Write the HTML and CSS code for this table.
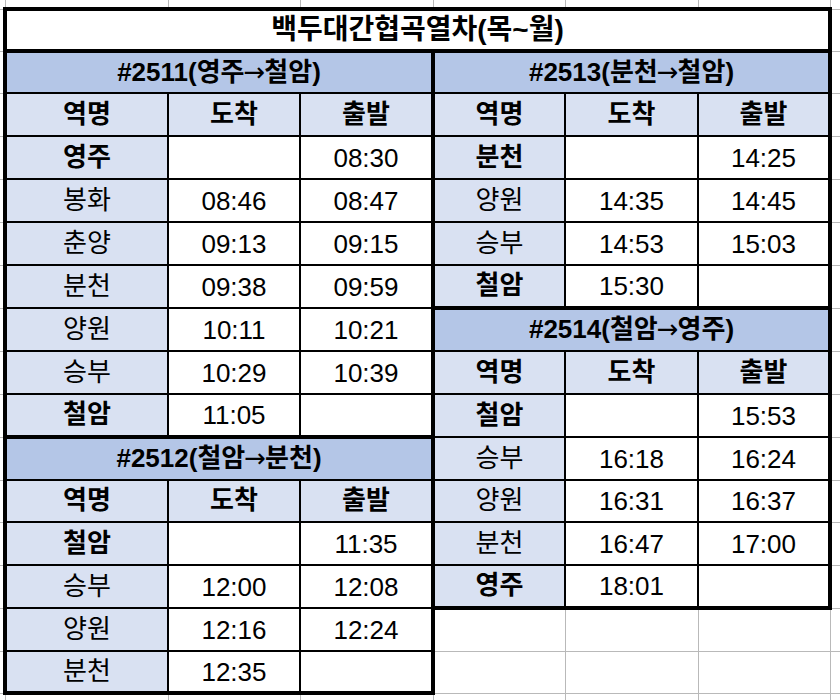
FILE: index.html
```html
<!DOCTYPE html>
<html lang="ko">
<head>
<meta charset="utf-8">
<title>백두대간협곡열차(목~월)</title>
<link rel="stylesheet" href="styles.css">
</head>
<body>
<table class="sheet">
  <colgroup>
    <col class="c-edge">
    <col class="c-a">
    <col class="c-b">
    <col class="c-c">
    <col class="c-b">
    <col class="c-c">
    <col class="c-b">
    <col class="c-end">
  </colgroup>
  <tr class="r-top">
    <td class="g e0"></td><td class="g"></td><td class="g"></td><td class="g"></td><td class="g"></td><td class="g"></td><td class="g"></td><td class="g"></td>
  </tr>
  <tr class="r42">
    <td class="g e0"></td>
    <td class="title" colspan="6">백두대간협곡열차(목~월)</td>
    <td class="g"></td>
  </tr>
  <tr class="r42">
    <td class="g e0"></td>
    <td class="hd" colspan="3">#2511(영주<span class="arr">→</span>철암)</td>
    <td class="hd" colspan="3">#2513(분천<span class="arr">→</span>철암)</td>
    <td class="g"></td>
  </tr>
  <tr class="r43">
    <td class="g e0"></td>
    <td class="ch l">역명</td><td class="ch">도착</td><td class="ch r">출발</td>
    <td class="ch l">역명</td><td class="ch">도착</td><td class="ch r">출발</td>
    <td class="g"></td>
  </tr>
  <tr class="r43">
    <td class="g e0"></td>
    <td class="st b l">영주</td><td class="t"></td><td class="t r">08:30</td>
    <td class="st b l">분천</td><td class="t"></td><td class="t r">14:25</td>
    <td class="g"></td>
  </tr>
  <tr class="r43">
    <td class="g e0"></td>
    <td class="st l">봉화</td><td class="t">08:46</td><td class="t r">08:47</td>
    <td class="st l">양원</td><td class="t">14:35</td><td class="t r">14:45</td>
    <td class="g"></td>
  </tr>
  <tr class="r43">
    <td class="g e0"></td>
    <td class="st l">춘양</td><td class="t">09:13</td><td class="t r">09:15</td>
    <td class="st l">승부</td><td class="t">14:53</td><td class="t r">15:03</td>
    <td class="g"></td>
  </tr>
  <tr class="r43">
    <td class="g e0"></td>
    <td class="st l">분천</td><td class="t">09:38</td><td class="t r">09:59</td>
    <td class="st b l bt">철암</td><td class="t bt">15:30</td><td class="t r bt"></td>
    <td class="g"></td>
  </tr>
  <tr class="r43">
    <td class="g e0"></td>
    <td class="st l">양원</td><td class="t">10:11</td><td class="t r">10:21</td>
    <td class="hd" colspan="3">#2514(철암<span class="arr">→</span>영주)</td>
    <td class="g"></td>
  </tr>
  <tr class="r43">
    <td class="g e0"></td>
    <td class="st l">승부</td><td class="t">10:29</td><td class="t r">10:39</td>
    <td class="ch l">역명</td><td class="ch">도착</td><td class="ch r">출발</td>
    <td class="g"></td>
  </tr>
  <tr class="r43">
    <td class="g e0"></td>
    <td class="st b l bt">철암</td><td class="t bt">11:05</td><td class="t r bt"></td>
    <td class="st b l">철암</td><td class="t"></td><td class="t r">15:53</td>
    <td class="g"></td>
  </tr>
  <tr class="r43">
    <td class="g e0"></td>
    <td class="hd" colspan="3">#2512(철암<span class="arr">→</span>분천)</td>
    <td class="st l">승부</td><td class="t">16:18</td><td class="t r">16:24</td>
    <td class="g"></td>
  </tr>
  <tr class="r42">
    <td class="g e0"></td>
    <td class="ch l">역명</td><td class="ch">도착</td><td class="ch r">출발</td>
    <td class="st l">양원</td><td class="t">16:31</td><td class="t r">16:37</td>
    <td class="g"></td>
  </tr>
  <tr class="r43">
    <td class="g e0"></td>
    <td class="st b l">철암</td><td class="t"></td><td class="t r">11:35</td>
    <td class="st l">분천</td><td class="t">16:47</td><td class="t r">17:00</td>
    <td class="g"></td>
  </tr>
  <tr class="r43">
    <td class="g e0"></td>
    <td class="st l">승부</td><td class="t">12:00</td><td class="t r">12:08</td>
    <td class="st b l bt">영주</td><td class="t bt">18:01</td><td class="t r bt"></td>
    <td class="g"></td>
  </tr>
  <tr class="r43">
    <td class="g e0"></td>
    <td class="st l">양원</td><td class="t">12:16</td><td class="t r">12:24</td>
    <td class="g"></td><td class="g"></td><td class="g"></td>
    <td class="g"></td>
  </tr>
  <tr class="r42">
    <td class="g e0"></td>
    <td class="st l bt">분천</td><td class="t bt">12:35</td><td class="t r bt"></td>
    <td class="g"></td><td class="g"></td><td class="g"></td>
    <td class="g"></td>
  </tr>
  <tr class="r-bottom">
    <td class="g e0"></td><td class="g"></td><td class="g"></td><td class="g"></td><td class="g"></td><td class="g"></td><td class="g"></td><td class="g"></td>
  </tr>
</table>
</body>
</html>
```

FILE: styles.css
```css
html, body {
  margin: 0;
  padding: 0;
  background: #ffffff;
  overflow: hidden;
}

body {
  width: 840px;
  height: 700px;
  font-family: "Liberation Sans", "Noto Sans CJK KR", sans-serif;
  font-size: 26px;
  color: #000000;
}

.sheet {
  border-collapse: collapse;
  table-layout: fixed;
  width: 860px;
}

.c-edge { width: 5px; }
.c-a { width: 163px; }
.c-b { width: 132px; }
.c-c { width: 133px; }
.c-end { width: 30px; }

.r-top { height: 9px; }
.r42 { height: 42px; }
.r43 { height: 43px; }
.r-bottom { height: 30px; }

td {
  padding: 0;
  text-align: center;
  vertical-align: middle;
  line-height: 1;
  border: 2px solid #000000;
  white-space: nowrap;
  overflow: hidden;
}

.g {
  border: 1px solid #b9b9b9;
}

.r-top td {
  border-top: none;
}

.e0 {
  border-left: none;
}

.title {
  border: 4px solid #000000;
  font-weight: 700;
  font-size: 28px;
  background: #ffffff;
}

.hd {
  border-top: 4px solid #000000;
  border-left: 4px solid #000000;
  border-right: 4px solid #000000;
  background: #b4c6e7;
  font-weight: 700;
  padding-bottom: 2px;
}

.arr {
  font-family: "DejaVu Sans", sans-serif;
  font-weight: 400;
  font-size: 26px;
  display: inline-block;
  margin: 0 -1px;
}

.ch {
  background: #d9e1f2;
  font-weight: 700;
  padding-bottom: 2px;
}

.st {
  background: #d9e1f2;
  padding-bottom: 2px;
}

.st.b {
  font-weight: 700;
}

.t {
  background: #ffffff;
}

.l { border-left: 4px solid #000000; }
.r { border-right: 4px solid #000000; }
.bt { border-bottom: 4px solid #000000; }
```
